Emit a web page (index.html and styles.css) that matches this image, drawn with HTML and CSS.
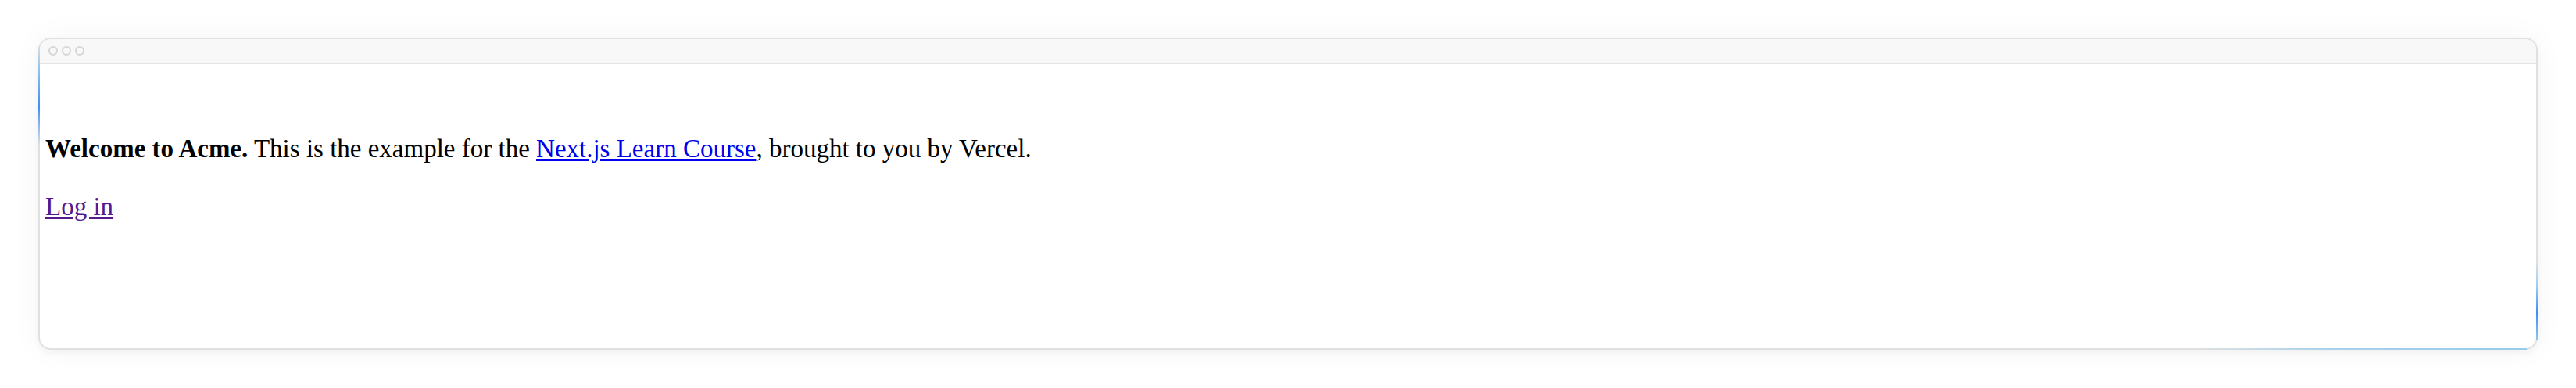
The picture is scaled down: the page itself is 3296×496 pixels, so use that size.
FILE: index.html
```html
<!DOCTYPE html>
<html lang="en">
<head>
<meta charset="utf-8">
<title>Acme</title>
<link rel="stylesheet" href="styles.css">
</head>
<body>
<div class="page">
  <div class="frame">
    <div class="titlebar">
      <span class="dot"></span><span class="dot"></span><span class="dot"></span>
    </div>
    <main class="content">
      <p class="intro"><strong>Welcome to Acme.</strong> This is the example for the <a class="link" href="https://nextjs.org/learn/">Next.js Learn Course</a>, brought to you by Vercel.</p>
      <p class="intro"><a class="link visited" href="/login">Log in</a></p>
    </main>
    <span class="beam beam-left"></span>
    <span class="beam beam-right"></span>
    <span class="beam beam-bottom"></span>
  </div>
</div>
</body>
</html>
```
FILE: styles.css
```css
html, body {
  margin: 0;
  padding: 0;
  background: #ffffff;
}
.page {
  padding: 48px 49px 49px 49px;
}
.frame {
  position: relative;
  box-sizing: border-box;
  height: 399px;
  border: 2px solid #e0e0e0;
  border-radius: 16px;
  background: #ffffff;
  box-shadow: 0 0 40px rgba(0, 0, 0, 0.045), 0 4px 10px rgba(0, 0, 0, 0.04);
}
.titlebar {
  height: 30px;
  border-bottom: 2px solid #e4e4e4;
  background: #f8f8f8;
  border-radius: 14px 14px 0 0;
  display: flex;
  align-items: center;
  gap: 5px;
  padding-left: 11px;
}
.dot {
  box-sizing: border-box;
  width: 12px;
  height: 12px;
  border: 2px solid #d6d6d6;
  border-radius: 50%;
}
.content {
  padding: 55px 8px 0 7px;
}
.intro {
  font-family: "Liberation Serif", serif;
  font-size: 33px;
  line-height: 42px;
  color: #000;
  margin: 32px 0;
}
.link {
  color: #0000ee;
}
.link.visited {
  color: #551a8b;
}
.beam {
  position: absolute;
  pointer-events: none;
}
.beam-left {
  left: -2px;
  top: 6px;
  width: 2px;
  height: 130px;
  background: linear-gradient(to bottom, rgba(150, 200, 240, 0), #8ec4ef 25%, #3d8ff5 62%, rgba(150, 200, 240, 0));
}
.beam-right {
  right: -2px;
  top: 285px;
  width: 2px;
  height: 100px;
  background: linear-gradient(to bottom, rgba(150, 200, 240, 0), #9ccdf0 30%, #3d8ff5 65%, #8ec6ee);
}
.beam-bottom {
  right: 12px;
  bottom: -2px;
  height: 2px;
  width: 420px;
  background: linear-gradient(to left, #98cbec, #a6d2ec 60%, rgba(200, 220, 230, 0));
}
```
